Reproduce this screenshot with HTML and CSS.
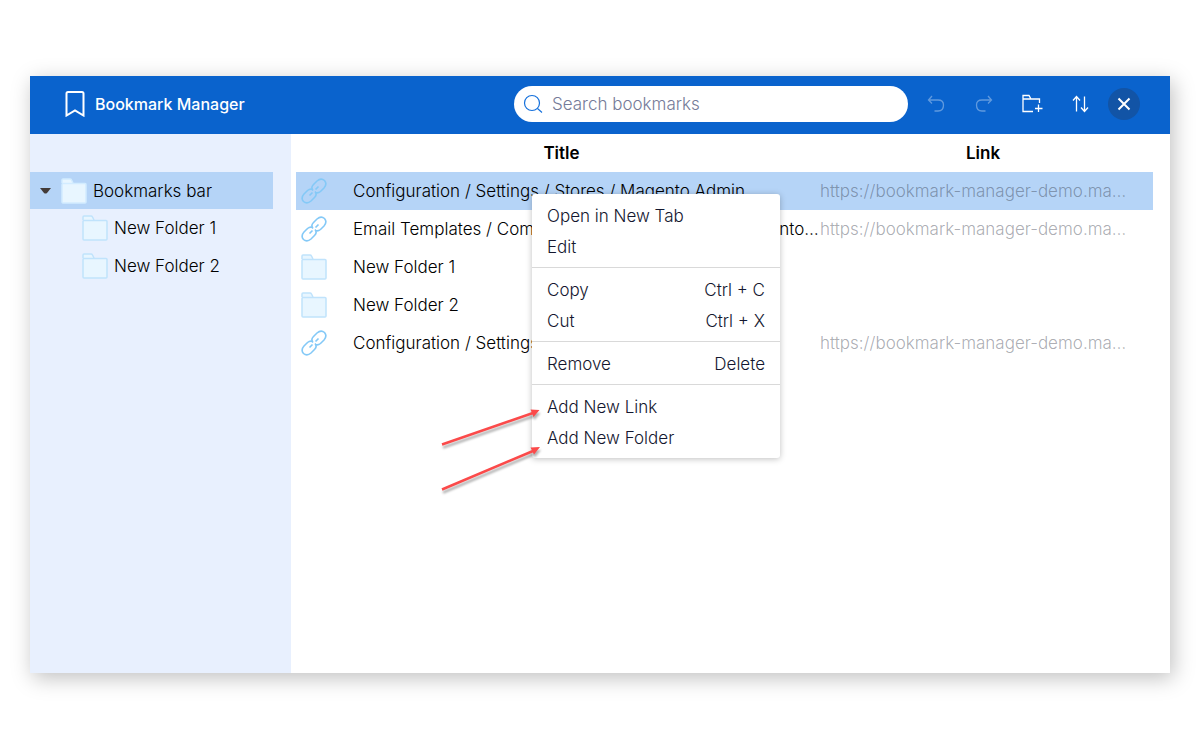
FILE: index.html
```html
<!DOCTYPE html>
<html lang="en">
<head>
  <meta charset="UTF-8">
  <meta name="viewport" content="width=device-width, initial-scale=1.0">
  <title>Bookmark Manager</title>
  <link rel="stylesheet" href="styles.css">
</head>
<body>
  <!-- shared icons -->
  <svg class="sprite" width="0" height="0" aria-hidden="true">
    <symbol id="folder" viewBox="0 0 26 26">
      <path d="M1 5V2Q1 1 2 1H9Q10 1 10.500 2L12 5" />
      <rect x="1" y="5.500" width="24" height="19.500" rx="1" />
    </symbol>
    <symbol id="link" viewBox="0 0 26 26">
      <path d="M12 12.500Q9.500 9.500 12.500 6.500L16 3Q20 -0.500 23.500 2.500Q26.500 6 23 10L19.500 13.500Q17 15.500 14.500 14.500" />
      <path d="M14 13.500Q16.500 16.500 13.500 19.500L10 23Q6 26.500 2.500 23.500Q-0.500 20 3 16L6.500 12.500Q9 10.500 11.500 11.500" />
      <path d="M8.500 17.500L11.500 14.500M14.500 11.500L17.500 8.500" />
    </symbol>
  </svg>

  <div class="app">
    <header class="header">
      <div class="brand">
        <svg class="brand-icon" width="20" height="26" viewBox="0 0 20 26">
          <path d="M1.500 2.500Q1.500 1 3 1H17Q18.500 1 18.500 2.500V24.500L10 19.500L1.500 24.500Z" />
        </svg>
        <span>Bookmark Manager</span>
      </div>

      <label class="search">
        <svg class="search-icon" width="20" height="20" viewBox="0 0 20 20">
          <circle cx="9" cy="9" r="7.500" />
          <path d="M14.500 14.500L19 18.500" />
        </svg>
        <input type="search" placeholder="Search bookmarks" aria-label="Search bookmarks">
      </label>

      <div class="tools">
        <button class="tool" aria-label="Undo" disabled>
          <svg width="20" height="20" viewBox="0 0 20 20"><path d="M6 2L2.500 6L6 9.500M2.500 6H12Q17.500 6 17.500 11Q17.500 17 12 17H8.500" /></svg>
        </button>
        <button class="tool" aria-label="Redo" disabled>
          <svg width="20" height="20" viewBox="0 0 20 20"><path d="M14 2L17.500 6L14 9.500M17.500 6H8Q2.500 6 2.500 11Q2.500 17 8 17H11.500" /></svg>
        </button>
        <button class="tool" aria-label="New folder">
          <svg width="22" height="20" viewBox="0 0 22 20"><path d="M12 17.500H2V1.500H8L10 5H18.500V9M2 5H10M17.500 10.500V18M14 14.500H21.500" /></svg>
        </button>
        <button class="tool" aria-label="Sort">
          <svg width="20" height="20" viewBox="0 0 20 20"><path d="M6.500 17.500V3M3 6.500L6.500 2.500L10 6.500M14.500 2.500V17M11 13.500L14.500 17.500L18 13.500" /></svg>
        </button>
      </div>

      <button class="tool close" aria-label="Close">
        <svg width="14" height="14" viewBox="0 0 14 14"><path d="M1.500 1.500L12.500 12.500M12.500 1.500L1.500 12.500" /></svg>
      </button>
    </header>

    <div class="content">
      <nav class="sidebar">
        <button class="node active">
          <svg class="caret" width="11" height="6" viewBox="0 0 11 6"><path d="M0 0H11L7 5Q5.500 6 4 5Z" /></svg>
          <svg class="folder" width="26" height="26"><use href="#folder" /></svg>
          Bookmarks bar
        </button>
        <button class="node child">
          <svg class="folder" width="26" height="26"><use href="#folder" /></svg>
          New Folder 1
        </button>
        <button class="node child">
          <svg class="folder" width="26" height="26"><use href="#folder" /></svg>
          New Folder 2
        </button>
      </nav>

      <main class="list">
        <table class="bookmarks">
          <colgroup>
            <col class="col-icon">
            <col class="col-title">
            <col class="col-link">
          </colgroup>
          <thead>
            <tr>
              <th class="head-title" colspan="2">Title</th>
              <th class="head-link">Link</th>
            </tr>
          </thead>
          <tbody>
            <tr class="selected">
              <td class="icon"><svg class="link" width="26" height="26"><use href="#link" /></svg></td>
              <td>Configuration / Settings / Stores / Magento Admin</td>
              <td class="url"><a href="#">https://bookmark-manager-demo.magento.com/admin</a></td>
            </tr>
            <tr>
              <td class="icon"><svg class="link" width="26" height="26"><use href="#link" /></svg></td>
              <td>Email Templates / Communications / Marketing/ Magento Admin</td>
              <td class="url"><a href="#">https://bookmark-manager-demo.magento.com/admin</a></td>
            </tr>
            <tr>
              <td class="icon"><svg class="folder" width="26" height="26"><use href="#folder" /></svg></td>
              <td>New Folder 1</td>
              <td class="url"></td>
            </tr>
            <tr>
              <td class="icon"><svg class="folder" width="26" height="26"><use href="#folder" /></svg></td>
              <td>New Folder 2</td>
              <td class="url"></td>
            </tr>
            <tr>
              <td class="icon"><svg class="link" width="26" height="26"><use href="#link" /></svg></td>
              <td>Configuration / Settings</td>
              <td class="url"><a href="#">https://bookmark-manager-demo.magento.com/admin</a></td>
            </tr>
          </tbody>
        </table>

        <div class="menu">
          <div class="group">
            <button>Open in New Tab</button>
            <button>Edit</button>
          </div>
          <div class="group">
            <button>Copy <span>Ctrl + C</span></button>
            <button>Cut <span>Ctrl + X</span></button>
          </div>
          <div class="group">
            <button>Remove <span>Delete</span></button>
          </div>
          <div class="group">
            <button>Add New Link</button>
            <button>Add New Folder</button>
          </div>
        </div>

        <svg class="arrows" width="110" height="100" viewBox="0 0 110 100">
          <path class="line" d="M2 44.500L93 13M2 89.500L93 51" />
          <path class="tip" d="M90.500 9.500L99.500 10L93.500 17ZM90.500 47.500L100 47L94 54.500Z" />
        </svg>
      </main>
    </div>
  </div>
</body>
</html>
```
FILE: styles.css
```css
* {
  box-sizing: border-box;
}

body {
  margin: 0;
  padding: 76px 30px;
  background: #fff;
  font-family: 'Inter', sans-serif;
  font-size: 17px;
  font-weight: 300;
  line-height: 24px;
  color: #000;
}

button,
input {
  font: inherit;
  color: inherit;
}

button {
  border: none;
  background: none;
  padding: 0;
  cursor: pointer;
}

svg {
  display: block;
  flex: none;
  fill: none;
}

.sprite {
  position: absolute;
}

.app {
  display: flex;
  flex-direction: column;
  min-height: calc(100vh - 153px);
  background: #fff;
  box-shadow: 3px 5px 20px rgba(0, 0, 0, 0.25);
}

/* header */
.header {
  display: flex;
  align-items: center;
  gap: 12px;
  height: 58px;
  padding: 0 30px 2px 35px;
  background: #0a63cd;
  color: #fff;
}

.brand {
  display: flex;
  align-items: center;
  gap: 10px;
  flex: 1;
  font-size: 16px;
  font-weight: 500;
}

.brand-icon {
  stroke: #fff;
  stroke-width: 2;
}

.search {
  display: flex;
  align-items: center;
  gap: 9px;
  width: 394px;
  height: 36px;
  padding: 0 20px 0 9px;
  border-radius: 18px;
  background: #fff;
}

.search-icon {
  stroke: #1470dc;
  stroke-width: 1.2;
}

.search input {
  flex: 1;
  min-width: 0;
  padding: 0;
  border: none;
  outline: none;
  background: none;
  color: #222;
}

.search input::placeholder {
  color: #757b98;
}

.tools {
  display: flex;
  gap: 16px;
}

.tool {
  display: flex;
  align-items: center;
  justify-content: center;
  width: 32px;
  height: 32px;
  border-radius: 50%;
}

.tool svg {
  stroke: #fff;
  stroke-width: 1.3;
}

.tool:disabled svg {
  opacity: 0.35;
}

.close {
  background: #1254a6;
}

.close svg {
  stroke-width: 2;
}

/* folders */
.content {
  display: flex;
  flex: 1;
}

.sidebar {
  flex: 0 0 261px;
  padding: 38px 18px 0 0;
  background: #e8f0fe;
}

.node {
  display: flex;
  align-items: center;
  gap: 6px;
  width: 100%;
  height: 38px;
  padding-left: 52px;
}

.node.active {
  height: 37px;
  padding-left: 10px;
  background: #b5d4f7;
}

.caret {
  margin-right: 4px;
  fill: #433b38;
}

.folder {
  fill: #e8f6ff;
  stroke: #c0e3fc;
  stroke-width: 1.5;
}

.link {
  stroke: #84c9f7;
  stroke-width: 1.6;
}

.active .folder {
  stroke: #d2ecff;
}

/* bookmarks */
.list {
  position: relative;
  flex: 1;
  min-width: 0;
  padding: 0 17px 0 5px;
}

.bookmarks {
  width: 100%;
  table-layout: fixed;
  border-collapse: collapse;
}

.col-icon {
  width: 57px;
}

.col-link {
  width: 333px;
}

th {
  height: 38px;
  padding: 0;
  font-weight: 600;
}

.head-title {
  padding-left: 7px;
}

.head-link {
  padding-right: 7px;
}

td {
  height: 38px;
  padding: 0;
  overflow: hidden;
  text-overflow: ellipsis;
  white-space: nowrap;
}

td.icon {
  padding-left: 5px;
}

td.url {
  padding-right: 20px;
  color: rgba(40, 44, 60, 0.4);
}

.url a {
  color: inherit;
  text-decoration: none;
}

.selected {
  background: #b5d4f7;
}

/* context menu */
.menu {
  position: absolute;
  top: 60px;
  left: 241px;
  width: 248px;
  border-radius: 3px;
  background: #fff;
  box-shadow: 0 1px 6px rgba(0, 0, 0, 0.25);
  color: #14172f;
}

.group {
  padding: 6px 0 5px;
}

.group + .group {
  border-top: 1px solid #d9d9d9;
}

.group button {
  display: flex;
  justify-content: space-between;
  align-items: center;
  width: 100%;
  height: 31px;
  padding: 0 15px;
}

.arrows {
  position: absolute;
  top: 266px;
  left: 149px;
  filter: drop-shadow(1px 3px 1px rgba(0, 0, 0, 0.3));
}

.arrows .line {
  stroke: #fb4a4a;
  stroke-width: 2.5;
}

.arrows .tip {
  fill: #fb4a4a;
}
```
